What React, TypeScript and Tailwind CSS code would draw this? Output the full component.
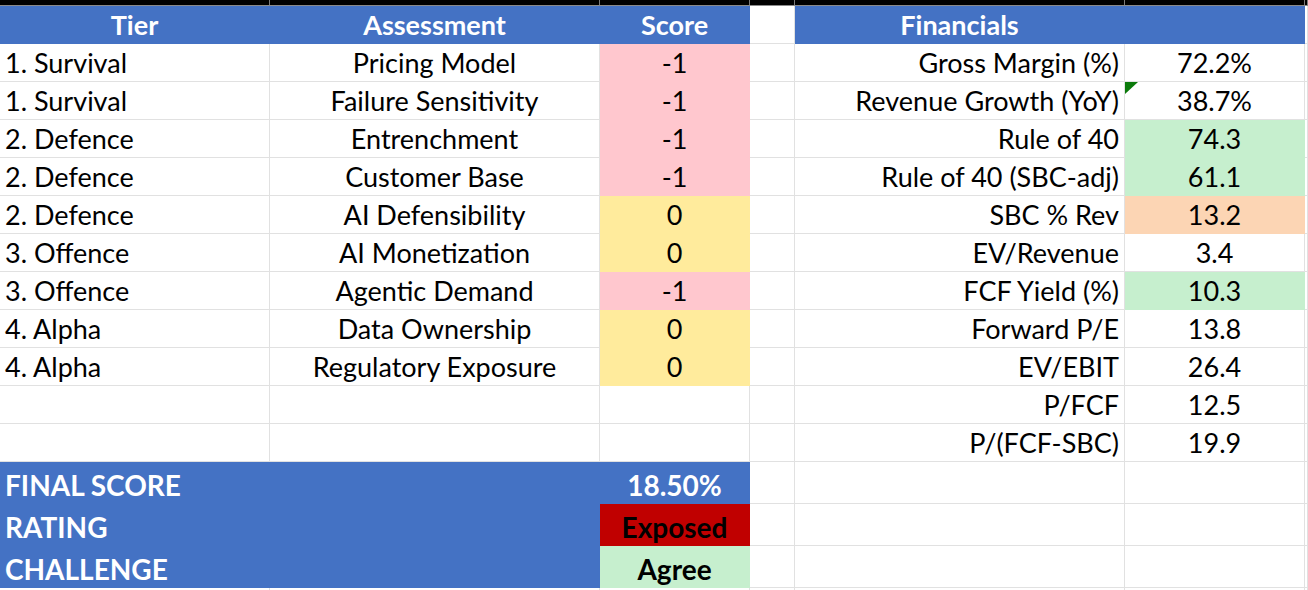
import React from "react";

type Fill = "pink" | "yellow" | "green" | "orange" | "blue" | "red" | undefined;

const FILLS: Record<string, string> = {
  pink: "bg-[#ffc7ce] border-transparent",
  yellow: "bg-[#ffeb9c] border-transparent",
  green: "bg-[#c6efce] border-transparent",
  orange: "bg-[#fcd5b4] border-transparent",
  blue: "bg-[#4472c4] border-transparent text-white",
  red: "bg-[#c00000] border-transparent",
};

const COLS = "grid grid-cols-[270px_330px_150px_45px_330px_180px_1fr]";

// left table: tier, assessment, score, fill
const assessments: [string, string, string, Fill][] = [
  ["1. Survival", "Pricing Model", "-1", "pink"],
  ["1. Survival", "Failure Sensitivity", "-1", "pink"],
  ["2. Defence", "Entrenchment", "-1", "pink"],
  ["2. Defence", "Customer Base", "-1", "pink"],
  ["2. Defence", "AI Defensibility", "0", "yellow"],
  ["3. Offence", "AI Monetization", "0", "yellow"],
  ["3. Offence", "Agentic Demand", "-1", "pink"],
  ["4. Alpha", "Data Ownership", "0", "yellow"],
  ["4. Alpha", "Regulatory Exposure", "0", "yellow"],
  ["", "", "", undefined],
  ["", "", "", undefined],
];

const financials: [string, string, Fill][] = [
  ["Gross Margin (%)", "72.2%", undefined],
  ["Revenue Growth (YoY)", "38.7%", undefined],
  ["Rule of 40", "74.3", "green"],
  ["Rule of 40 (SBC-adj)", "61.1", "green"],
  ["SBC % Rev", "13.2", "orange"],
  ["EV/Revenue", "3.4", undefined],
  ["FCF Yield (%)", "10.3", "green"],
  ["Forward P/E", "13.8", undefined],
  ["EV/EBIT", "26.4", undefined],
  ["P/FCF", "12.5", undefined],
  ["P/(FCF-SBC)", "19.9", undefined],
];

function Cell({
  children,
  fill,
  align = "center",
  bold,
  className = "",
}: {
  children?: React.ReactNode;
  fill?: Fill;
  align?: "left" | "center" | "right";
  bold?: boolean;
  className?: string;
}) {
  const alignCls =
    align === "left" ? "justify-start pl-[5px]" : align === "right" ? "justify-end pr-[5px]" : "justify-center";
  return (
    <div
      className={`relative flex items-center whitespace-nowrap overflow-hidden border-r border-b border-[#e1e1e1] ${alignCls} ${
        bold ? "font-bold" : ""
      } ${fill ? FILLS[fill] : ""} ${className}`}
    >
      {children}
    </div>
  );
}

export default function App() {
  return (
    <div className="w-[1308px] h-[590px] overflow-hidden bg-white text-black font-['Lato',sans-serif] text-[27px] leading-none">
      {/* column header strip, cropped */}
      <div className={`${COLS} h-[6px] bg-black border-b border-[#8a8a8a]`}>
        {Array.from({ length: 7 }).map((_, i) => (
          <div key={i} className="border-r border-[#7a7a7a]" />
        ))}
      </div>

      {/* header row */}
      <div className={`${COLS} h-[38px]`}>
        <Cell fill="blue" bold>Tier</Cell>
        <Cell fill="blue" bold>Assessment</Cell>
        <Cell fill="blue" bold>Score</Cell>
        <Cell />
        <Cell fill="blue" bold>Financials</Cell>
        <Cell fill="blue" />
        <Cell />
      </div>

      {/* data rows */}
      {assessments.map((row, i) => {
        const fin = financials[i];
        return (
          <div key={i} className={`${COLS} h-[38px]`}>
            <Cell align="left">{row[0]}</Cell>
            <Cell>{row[1]}</Cell>
            <Cell fill={row[3]}>{row[2]}</Cell>
            <Cell />
            <Cell align="right">{fin[0]}</Cell>
            <Cell fill={fin[2]}>
              {i === 1 && (
                <svg className="absolute left-0 top-0" width="13" height="12" viewBox="0 0 13 12">
                  <polygon points="0,0 13,0 0,12" fill="#0b7a0b" />
                </svg>
              )}
              {fin[1]}
            </Cell>
            <Cell />
          </div>
        );
      })}

      {/* summary rows */}
      <div className={`${COLS} h-[42px] text-[28px]`}>
        <Cell fill="blue" bold align="left" className="col-span-2 pt-[5px]">FINAL SCORE</Cell>
        <Cell fill="blue" bold className="pt-[5px]">18.50%</Cell>
        <Cell />
        <Cell />
        <Cell />
        <Cell />
      </div>
      <div className={`${COLS} h-[42px] text-[28px]`}>
        <Cell fill="blue" bold align="left" className="col-span-2 pt-[5px]">RATING</Cell>
        <Cell fill="red" bold className="pt-[5px]">Exposed</Cell>
        <Cell />
        <Cell />
        <Cell />
        <Cell />
      </div>
      <div className={`${COLS} h-[42px] text-[28px]`}>
        <Cell fill="blue" bold align="left" className="col-span-2 pt-[5px]">CHALLENGE</Cell>
        <Cell fill="green" bold className="pt-[5px]">Agree</Cell>
        <Cell />
        <Cell />
        <Cell />
        <Cell />
      </div>
      <div className={`${COLS} h-[42px]`}>
        {Array.from({ length: 7 }).map((_, i) => (
          <Cell key={i} />
        ))}
      </div>
    </div>
  );
}
